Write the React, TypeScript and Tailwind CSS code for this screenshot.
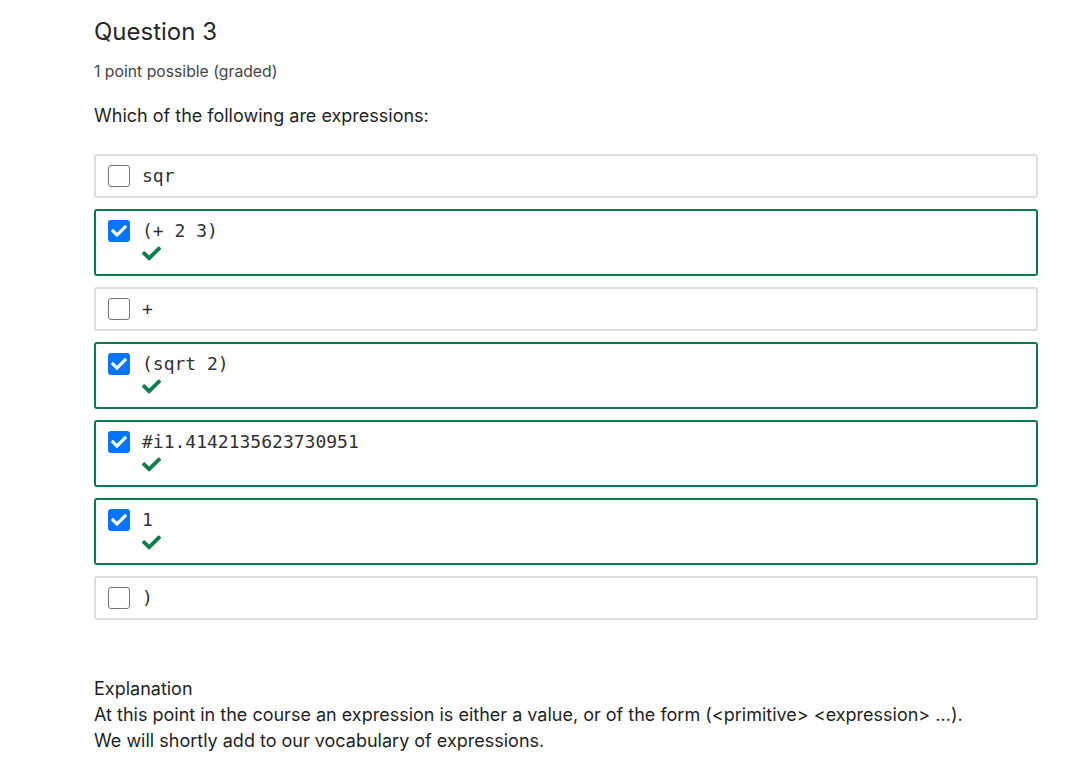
import React from "react";

// --- Types ---
interface Choice {
  id: string;
  label: string;
  checked: boolean;
}

// --- Data ---
const choices: Choice[] = [
  { id: "a", label: "sqr", checked: false },
  { id: "b", label: "(+ 2 3)", checked: true },
  { id: "c", label: "+", checked: false },
  { id: "d", label: "(sqrt 2)", checked: true },
  { id: "e", label: "#i1.4142135623730951", checked: true },
  { id: "f", label: "1", checked: true },
  { id: "g", label: ")", checked: false },
];

const CHECK_PATH =
  "M173.898 439.404l-166.4-166.4c-9.997-9.997-9.997-26.206 0-36.204l36.203-36.204c9.997-9.998 26.207-9.998 36.204 0L192 312.69 432.095 72.596c9.997-9.997 26.207-9.997 36.204 0l36.203 36.204c9.997 9.997 9.997 26.206 0 36.204l-294.4 294.401c-9.998 9.997-26.207 9.997-36.204-.001z";

// --- Components ---

const Box = ({ checked }: { checked: boolean }) =>
  checked ? (
    <span className="flex h-[22px] w-[22px] shrink-0 items-center justify-center rounded-[3px] bg-[#0075ff]">
      <svg width="16" height="16" viewBox="0 0 512 512">
        <path d={CHECK_PATH} fill="#fff" />
      </svg>
    </span>
  ) : (
    <span className="h-[22px] w-[22px] shrink-0 rounded-[3px] border border-[#767676] bg-white" />
  );

const CorrectMark = () => (
  <svg width="19" height="19" viewBox="0 0 512 512" className="mt-[2px]">
    <path d={CHECK_PATH} fill="#0d7d4d" />
  </svg>
);

const ChoiceRow = ({ choice }: { choice: Choice }) => (
  <label
    className={
      choice.checked
        ? "flex items-start gap-3 rounded-[3px] border-2 border-[#0d7a4b] px-3 py-[9px]"
        : "flex items-start gap-3 rounded-[3px] border-2 border-[#dedede] px-3 py-[9px]"
    }
  >
    <Box checked={choice.checked} />
    <div className="flex flex-col">
      <span className="h-[22px] whitespace-pre font-['DejaVu_Sans_Mono',monospace] text-[18px] leading-[22px] text-[#313131]">
        {choice.label}
      </span>
      {choice.checked && (
        <div className="h-[23px]">
          <CorrectMark />
        </div>
      )}
    </div>
  </label>
);

export default function App() {
  return (
    <div className="min-h-screen bg-white font-['Inter',sans-serif] text-[#222]">
      <div className="ml-[94px] w-[944px] pt-[17px]">
        <h2 className="text-[24px] leading-[30px] text-[#262626]">Question 3</h2>
        <p className="mt-[15px] text-[15.75px] leading-[20px] text-[#454545]">1 point possible (graded)</p>
        <p className="mt-[23px] text-[18px] leading-[22px] text-[#1f1f1f]">Which of the following are expressions:</p>

        {/* Choices */}
        <div className="mt-[27px] flex flex-col gap-[11px]">
          {choices.map((c) => (
            <ChoiceRow key={c.id} choice={c} />
          ))}
        </div>

        {/* Explanation */}
        <div className="mt-[56px] text-[18px] leading-[26px] text-[#1f1f1f]">
          <p>Explanation</p>
          <p>At this point in the course an expression is either a value, or of the form (&lt;primitive&gt; &lt;expression&gt; ...).</p>
          <p>We will shortly add to our vocabulary of expressions.</p>
        </div>
      </div>
    </div>
  );
}
